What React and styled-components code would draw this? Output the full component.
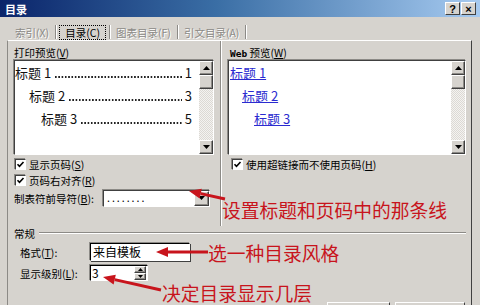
import React from "react";
import styled, { createGlobalStyle } from "styled-components";

const RED = "#c8141c";
const UI = "10.5px";

const GlobalStyle = createGlobalStyle`
  html, body {
    margin: 0;
    padding: 0;
    background: #d6d3ce;
  }
  body {
    font-family: "Noto Sans CJK SC", "Liberation Sans", sans-serif;
    font-size: ${UI};
    color: #000;
  }
`;

const Arrow = ({ from, to }) => {
  const dx = to[0] - from[0];
  const dy = to[1] - from[1];
  const len = Math.hypot(dx, dy);
  const ux = dx / len;
  const uy = dy / len;
  const bx = to[0] - ux * 12;
  const by = to[1] - uy * 12;
  const px = -uy * 5;
  const py = ux * 5;
  return (
    <g>
      <line x1={from[0]} y1={from[1]} x2={bx} y2={by} stroke={RED} strokeWidth="3" />
      <polygon
        points={`${to[0]},${to[1]} ${bx + px},${by + py} ${bx - px},${by - py}`}
        fill={RED}
      />
    </g>
  );
};

const Check = () => (
  <svg width="9" height="9" viewBox="0 0 9 9">
    <path d="M1.5 4.2 L3.5 6.3 L7.5 2" fill="none" stroke="#000" strokeWidth="1.6" />
  </svg>
);

const Tri = ({ down }) => (
  <svg width="7" height="4" viewBox="0 0 7 4">
    <polygon points={down ? "0,0 7,0 3.5,4" : "0,4 7,4 3.5,0"} fill="#000" />
  </svg>
);

const App = () => {
  return (
    <Dialog>
      <GlobalStyle />
      <TitleBar>
        <span>目录</span>
        <TitleButtons>
          <TitleButton>?</TitleButton>
          <TitleButton>×</TitleButton>
        </TitleButtons>
      </TitleBar>

      <TabStrip>
        <Tab>索引(<u>X</u>)</Tab>
        <TabSep />
        <Tab active>目录(<u>C</u>)</Tab>
        <TabSep />
        <Tab>图表目录(<u>F</u>)</Tab>
        <TabSep />
        <Tab>引文目录(<u>A</u>)</Tab>
        <TabSep />
      </TabStrip>

      <Panel>
        <PreviewGrid>
          <Column>
            <Label>打印预览(<u>V</u>)</Label>
            <ListBox>
              <ListContent>
                <TocEntry indent={0}>
                  <span>标题 1</span>
                  <Leader />
                  <span>1</span>
                </TocEntry>
                <TocEntry indent={14}>
                  <span>标题 2</span>
                  <Leader />
                  <span>3</span>
                </TocEntry>
                <TocEntry indent={26}>
                  <span>标题 3</span>
                  <Leader />
                  <span>5</span>
                </TocEntry>
              </ListContent>
              <ScrollBar>
                <ScrollButton><Tri /></ScrollButton>
                <Thumb />
                <Track />
                <ScrollButton><Tri down /></ScrollButton>
              </ScrollBar>
            </ListBox>
            <CheckRow>
              <CheckBox><Check /></CheckBox>
              显示页码(<u>S</u>)
            </CheckRow>
            <CheckRow>
              <CheckBox><Check /></CheckBox>
              页码右对齐(<u>R</u>)
            </CheckRow>
            <LeaderRow>
              <span>制表符前导符(<u>B</u>):</span>
              <Combo>
                <ComboText>........</ComboText>
                <ComboButton><Tri down /></ComboButton>
              </Combo>
            </LeaderRow>
          </Column>

          <Divider />

          <Column>
            <Label pad={2}>
              <Mono>Web</Mono> 预览(<u>W</u>)
            </Label>
            <ListBox>
              <ListContent>
                <WebEntry indent={1}><a>标题 1</a></WebEntry>
                <WebEntry indent={13}><a>标题 2</a></WebEntry>
                <WebEntry indent={25}><a>标题 3</a></WebEntry>
              </ListContent>
              <ScrollBar>
                <ScrollButton><Tri /></ScrollButton>
                <Thumb />
                <Track />
                <ScrollButton><Tri down /></ScrollButton>
              </ScrollBar>
            </ListBox>
            <CheckRow pad={4}>
              <CheckBox><Check /></CheckBox>
              使用超链接而不使用页码(<u>H</u>)
            </CheckRow>
          </Column>
        </PreviewGrid>

        <GroupHeader>
          <span>常规</span>
          <GroupLine />
        </GroupHeader>

        <FieldRow>
          <FieldLabel>格式(<u>T</u>):</FieldLabel>
          <TextBox width={100}>来自模板</TextBox>
        </FieldRow>
        <FieldRow>
          <FieldLabel>显示级别(<u>L</u>):</FieldLabel>
          <SpinBox>
            <SpinValue>3</SpinValue>
            <SpinButtons>
              <SpinButton><Tri /></SpinButton>
              <SpinButton><Tri down /></SpinButton>
            </SpinButtons>
          </SpinBox>
        </FieldRow>

        <ButtonRow>
          <DlgButton width={63} />
          <DlgButton width={70} />
        </ButtonRow>
      </Panel>

      <Overlay width="480" height="305">
        <Arrow from={[225, 199]} to={[189, 191]} />
        <Arrow from={[208, 252]} to={[156, 252]} />
        <Arrow from={[161, 290]} to={[103, 277]} />
      </Overlay>
      <Callout x={222} y={200}>设置标题和页码中的那条线</Callout>
      <Callout x={208} y={243}>选一种目录风格</Callout>
      <Callout x={162} y={283}>决定目录显示几层</Callout>
    </Dialog>
  );
};

const Dialog = styled.div`
  position: relative;
  width: 480px;
  height: 305px;
  overflow: hidden;
  background: #d6d3ce;
`;

const TitleBar = styled.div`
  height: 17px;
  display: flex;
  align-items: center;
  justify-content: space-between;
  padding: 0 4px 0 5px;
  background: linear-gradient(to right, #0a246a, #3a6ea5 45%, #a6caf0);
  color: #fff;
  font-weight: bold;
  font-size: 11px;
`;

const TitleButtons = styled.div`
  display: flex;
  gap: 1px;
`;

const TitleButton = styled.div`
  width: 15px;
  height: 13px;
  box-sizing: border-box;
  display: flex;
  align-items: center;
  justify-content: center;
  background: #d6d3ce;
  border: 1px solid;
  border-color: #fff #404040 #404040 #fff;
  color: #000;
  font: bold 11px "Liberation Sans", sans-serif;
`;

const TabStrip = styled.div`
  display: flex;
  align-items: center;
  height: 16px;
  margin: 7px 0 0 12px;
`;

const Tab = styled.div`
  height: 15px;
  line-height: 15px;
  padding: 0 ${({ active }) => (active ? 6 : 3)}px;
  color: ${({ active }) => (active ? "#000" : "#8c8a86")};
  text-shadow: ${({ active }) => (active ? "none" : "1px 1px 0 #fff")};
  outline: ${({ active }) => (active ? "1px dotted #000" : "none")};
  outline-offset: -1px;
  u {
    text-decoration: none;
  }
`;

const TabSep = styled.div`
  width: 1px;
  height: 14px;
  margin: 0 3px;
  background: #8c8a86;
  box-shadow: 1px 0 0 #fff;
`;

const Panel = styled.div`
  margin: 0 8px 0 7px;
  padding: 5px 5px 0 6px;
  border-top: 1px solid #fff;
  border-left: 1px solid #8c8a86;
  border-right: 1px solid #404040;
  height: 400px;
`;

const PreviewGrid = styled.div`
  display: grid;
  grid-template-columns: 200px 14px 238px;
`;

const Column = styled.div`
  display: flex;
  flex-direction: column;
`;

const Divider = styled.div`
  justify-self: center;
  width: 0;
  margin: -5px 0 -19px;
  border-left: 1px solid #8c8a86;
  border-right: 1px solid #fff;
`;

const Label = styled.div`
  height: 14px;
  line-height: 14px;
  padding-left: ${({ pad }) => pad || 0}px;
`;

const Mono = styled.span`
  font-family: "DejaVu Sans Mono", "Liberation Mono", monospace;
  font-size: 9.5px;
  font-weight: bold;
`;

const ListBox = styled.div`
  height: 95px;
  box-sizing: border-box;
  display: flex;
  background: #fff;
  border: 1px solid;
  border-color: #404040 #fff #fff #404040;
  box-shadow: -1px -1px 0 #8c8a86;
`;

const ListContent = styled.div`
  flex: 1;
  min-width: 0;
  padding: 0 7px 0 0;
  overflow: hidden;
`;

const TocEntry = styled.div`
  display: flex;
  height: 23px;
  line-height: 23px;
  padding-left: ${({ indent }) => indent}px;
  font-size: 13px;
  white-space: nowrap;
  color: #111;
`;

const Leader = styled.span`
  flex: 1;
  margin: 0 3px 0 4px;
  background-image: radial-gradient(circle at 1px 1px, #222 0.8px, transparent 1.1px);
  background-size: 3.3px 2px;
  background-repeat: repeat-x;
  background-position: 0 15px;
`;

const WebEntry = styled.div`
  height: 23px;
  line-height: 23px;
  padding-left: ${({ indent }) => indent}px;
  font-size: 13px;
  a {
    color: #2b2bd0;
    text-decoration: underline;
  }
`;

const ScrollBar = styled.div`
  width: 14px;
  display: flex;
  flex-direction: column;
  background: repeating-conic-gradient(#f4f3f1 0 25%, #dcd9d4 0 50%) 0 0 / 2px 2px;
`;

const ScrollButton = styled.div`
  width: 14px;
  height: 14px;
  box-sizing: border-box;
  display: flex;
  align-items: center;
  justify-content: center;
  background: #d6d3ce;
  border: 1px solid;
  border-color: #fff #404040 #404040 #fff;
  box-shadow: inset -1px -1px 0 #8c8a86;
`;

const Thumb = styled(ScrollButton)``;

const Track = styled.div`
  flex: 1;
`;

const CheckRow = styled.div`
  display: flex;
  align-items: center;
  height: 14px;
  margin-top: 2px;
  padding-left: ${({ pad }) => (pad == null ? 1 : pad)}px;
  white-space: nowrap;
`;

const CheckBox = styled.span`
  width: 11px;
  height: 11px;
  box-sizing: border-box;
  display: inline-flex;
  align-items: center;
  justify-content: center;
  margin-right: 3px;
  background: #fff;
  border: 1px solid;
  border-color: #404040 #fff #fff #404040;
  box-shadow: -1px -1px 0 #8c8a86;
`;

const LeaderRow = styled.div`
  display: flex;
  align-items: center;
  height: 18px;
  margin-top: 2px;
  white-space: nowrap;
`;

const Combo = styled.div`
  width: 107px;
  height: 17px;
  box-sizing: border-box;
  display: flex;
  align-items: center;
  margin: 0 4px 0 auto;
  background: #fff;
  border: 1px solid;
  border-color: #404040 #fff #fff #404040;
  box-shadow: -1px -1px 0 #8c8a86;
`;

const ComboText = styled.span`
  flex: 1;
  padding-left: 3px;
  letter-spacing: 2px;
  line-height: 10px;
`;

const ComboButton = styled(ScrollButton)`
  width: 15px;
  height: 15px;
`;

const GroupHeader = styled.div`
  display: flex;
  align-items: center;
  height: 14px;
  margin-top: 19px;
`;

const GroupLine = styled.div`
  flex: 1;
  height: 0;
  margin-left: 4px;
  border-top: 1px solid #8c8a86;
  border-bottom: 1px solid #fff;
`;

const FieldRow = styled.div`
  display: flex;
  align-items: center;
  height: 18px;
  margin-top: 3px;
  padding-left: 6px;
  white-space: nowrap;
`;

const FieldLabel = styled.span`
  width: 70px;
`;

const TextBox = styled.div`
  width: ${({ width }) => width}px;
  height: 18px;
  box-sizing: border-box;
  padding-left: 2px;
  line-height: 16px;
  font-size: 12px;
  background: #fff;
  border: 1px solid;
  border-color: #000 #fff #fff #000;
  box-shadow: -1px -1px 0 #8c8a86, 1px 1px 0 #404040;
`;

const SpinBox = styled.div`
  width: 58px;
  height: 16px;
  box-sizing: border-box;
  display: flex;
  background: #fff;
  border: 1px solid;
  border-color: #000 #fff #fff #000;
  box-shadow: -1px -1px 0 #8c8a86;
`;

const SpinValue = styled.span`
  flex: 1;
  padding-left: 1px;
  line-height: 14px;
  font-size: 12px;
`;

const SpinButtons = styled.div`
  display: flex;
  flex-direction: column;
  margin-right: 1px;
`;

const SpinButton = styled(ScrollButton)`
  width: 12px;
  height: 7px;
  svg {
    width: 5px;
    height: 3px;
  }
`;

const ButtonRow = styled.div`
  display: flex;
  justify-content: flex-end;
  gap: 5px;
  margin-top: 20px;
  padding-right: 1px;
`;

const DlgButton = styled.div`
  width: ${({ width }) => width}px;
  height: 23px;
  box-sizing: border-box;
  background: #d6d3ce;
  border: 1px solid;
  border-color: #fff #404040 #404040 #fff;
`;

const Overlay = styled.svg`
  position: absolute;
  left: 0;
  top: 0;
  pointer-events: none;
`;

const Callout = styled.div.attrs(({ x, y }) => ({
  style: { left: x, top: y },
}))`
  position: absolute;
  color: ${RED};
  font-size: 18.75px;
  line-height: 19px;
  white-space: nowrap;
  font-family: "Noto Sans CJK SC", sans-serif;
`;

export default App;
